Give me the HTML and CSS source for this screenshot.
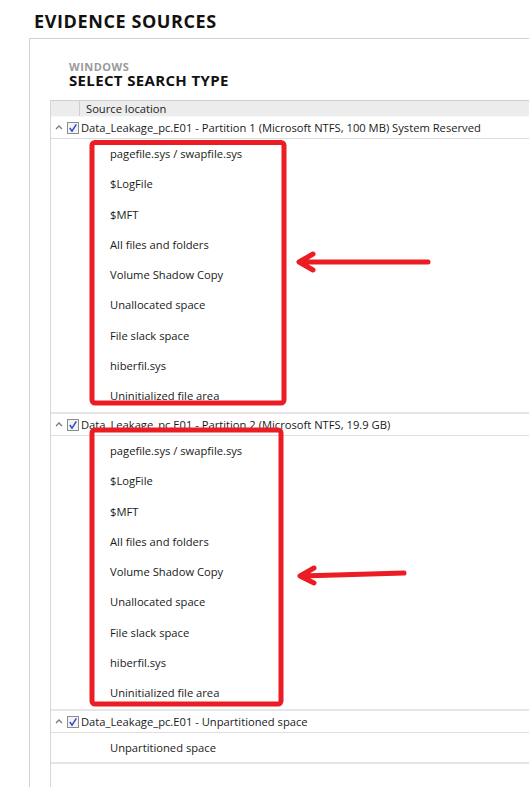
FILE: index.html
```html
<!DOCTYPE html>
<html>
<head>
  <title>Evidence Sources</title>
  <link rel="stylesheet" href="styles.css">
</head>
<body>
  <h1 class="page-title">EVIDENCE SOURCES</h1>

  <div class="panel">
    <div class="panel-heading">
      <div class="panel-kicker">WINDOWS</div>
      <div class="panel-title">SELECT SEARCH TYPE</div>
    </div>

    <div class="source-table">
      <div class="table-head">
        <div class="head-blank"></div>
        <div class="head-label">Source location</div>
      </div>

      <div class="source-row">
        <svg class="caret" width="8" height="5" viewBox="0 0 8 5"><path d="M1 4 L4 1 L7 4" fill="none" stroke="#7a7a7a" stroke-width="1.3"/></svg>
        <svg class="check" width="12" height="12" viewBox="0 0 12 12"><rect x="0.5" y="0.5" width="11" height="11" fill="#f3f3f3" stroke="#8c8c8c"/><path d="M2.8 6 L5 9.2 L9.3 2.3" fill="none" stroke="#2b4fc9" stroke-width="1.5"/></svg>
        <span>Data_Leakage_pc.E01 - Partition 1 (Microsoft NTFS, 100 MB) System Reserved</span>
      </div>
      <div class="item-group">
        <div class="item">pagefile.sys / swapfile.sys</div>
        <div class="item">$LogFile</div>
        <div class="item">$MFT</div>
        <div class="item">All files and folders</div>
        <div class="item">Volume Shadow Copy</div>
        <div class="item">Unallocated space</div>
        <div class="item">File slack space</div>
        <div class="item">hiberfil.sys</div>
        <div class="item">Uninitialized file area</div>
      </div>

      <div class="source-row">
        <svg class="caret" width="8" height="5" viewBox="0 0 8 5"><path d="M1 4 L4 1 L7 4" fill="none" stroke="#7a7a7a" stroke-width="1.3"/></svg>
        <svg class="check" width="12" height="12" viewBox="0 0 12 12"><rect x="0.5" y="0.5" width="11" height="11" fill="#f3f3f3" stroke="#8c8c8c"/><path d="M2.8 6 L5 9.2 L9.3 2.3" fill="none" stroke="#2b4fc9" stroke-width="1.5"/></svg>
        <span>Data_Leakage_pc.E01 - Partition 2 (Microsoft NTFS, 19.9 GB)</span>
      </div>
      <div class="item-group">
        <div class="item">pagefile.sys / swapfile.sys</div>
        <div class="item">$LogFile</div>
        <div class="item">$MFT</div>
        <div class="item">All files and folders</div>
        <div class="item">Volume Shadow Copy</div>
        <div class="item">Unallocated space</div>
        <div class="item">File slack space</div>
        <div class="item">hiberfil.sys</div>
        <div class="item">Uninitialized file area</div>
      </div>

      <div class="source-row">
        <svg class="caret" width="8" height="5" viewBox="0 0 8 5"><path d="M1 4 L4 1 L7 4" fill="none" stroke="#7a7a7a" stroke-width="1.3"/></svg>
        <svg class="check" width="12" height="12" viewBox="0 0 12 12"><rect x="0.5" y="0.5" width="11" height="11" fill="#f3f3f3" stroke="#8c8c8c"/><path d="M2.8 6 L5 9.2 L9.3 2.3" fill="none" stroke="#2b4fc9" stroke-width="1.5"/></svg>
        <span>Data_Leakage_pc.E01 - Unpartitioned space</span>
      </div>
      <div class="item-group single">
        <div class="item">Unpartitioned space</div>
      </div>
    </div>
  </div>

  <!-- red annotations drawn over the screenshot -->
  <svg class="markup" width="529" height="804" viewBox="0 0 529 804">
    <g fill="none" stroke="#ec1c24" stroke-width="5" stroke-linecap="round" stroke-linejoin="round">
      <rect x="92" y="142.5" width="192" height="260.5" rx="3"/>
      <rect x="92" y="430" width="189" height="274" rx="3"/>
      <path d="M428 262 L300 262 M313 254 L299 262 L313 270"/>
      <path d="M404 573 L301 576 M314 568 L300 576 L314 583"/>
    </g>
  </svg>
</body>
</html>
```

FILE: styles.css
```css
body {
  margin: 0;
  padding: 0;
  width: 529px;
  height: 804px;
  overflow: hidden;
  position: relative;
  background-color: #fff;
  color: #1a1a1a;
  font-family: "Open Sans", "Noto Sans", sans-serif;
}

.page-title {
  margin: 0;
  padding: 9px 0 0 34px;
  height: 29px;
  font-size: 18px;
  line-height: 24px;
  font-weight: 700;
  letter-spacing: 0.6px;
  color: #111;
}

.panel {
  margin-left: 29px;
  border-left: 1px solid #d2d2d2;
  border-top: 1px solid #d2d2d2;
  height: 748px;
}

.panel-heading {
  box-sizing: border-box;
  padding: 22px 0 0 39px;
  height: 61px;
}

.panel-kicker {
  font-size: 11px;
  line-height: 12px;
  font-weight: 700;
  letter-spacing: 0.5px;
  color: #9a9a9a;
}

.panel-title {
  font-size: 15px;
  line-height: 14px;
  font-weight: 700;
  letter-spacing: 0.35px;
  color: #111;
}

.source-table {
  margin-left: 20px;
  border-left: 1px solid #d6d6d6;
  height: 687px;
}

.table-head {
  display: flex;
  height: 15px;
  background-color: #ececec;
  border-top: 1px solid #d0d0d0;
  border-bottom: 1px solid #f8f8f8;
  font-size: 11.2px;
  line-height: 16px;
}

.head-blank {
  width: 28px;
  border-right: 1px solid #cfcfcf;
}

.head-label {
  padding-left: 6px;
  color: #222;
}

.source-row {
  display: flex;
  align-items: center;
  height: 21px;
  border-bottom: 1px solid #dedede;
  font-size: 11.2px;
  white-space: nowrap;
}

.caret {
  margin-left: 4px;
  margin-right: 4px;
}

.check {
  margin-right: 2px;
}

.item-group {
  padding: 0 0 0.75px;
  border-bottom: 2px solid #e6e6e6;
}

.item {
  height: 30.25px;
  line-height: 30.25px;
  padding-left: 59px;
  font-size: 11.2px;
  color: #1a1a1a;
}

.item-group.single {
  padding: 0;
}

.item-group.single .item {
  height: 29px;
  line-height: 29px;
}

.markup {
  position: absolute;
  top: 0;
  left: 0;
  pointer-events: none;
}
```
